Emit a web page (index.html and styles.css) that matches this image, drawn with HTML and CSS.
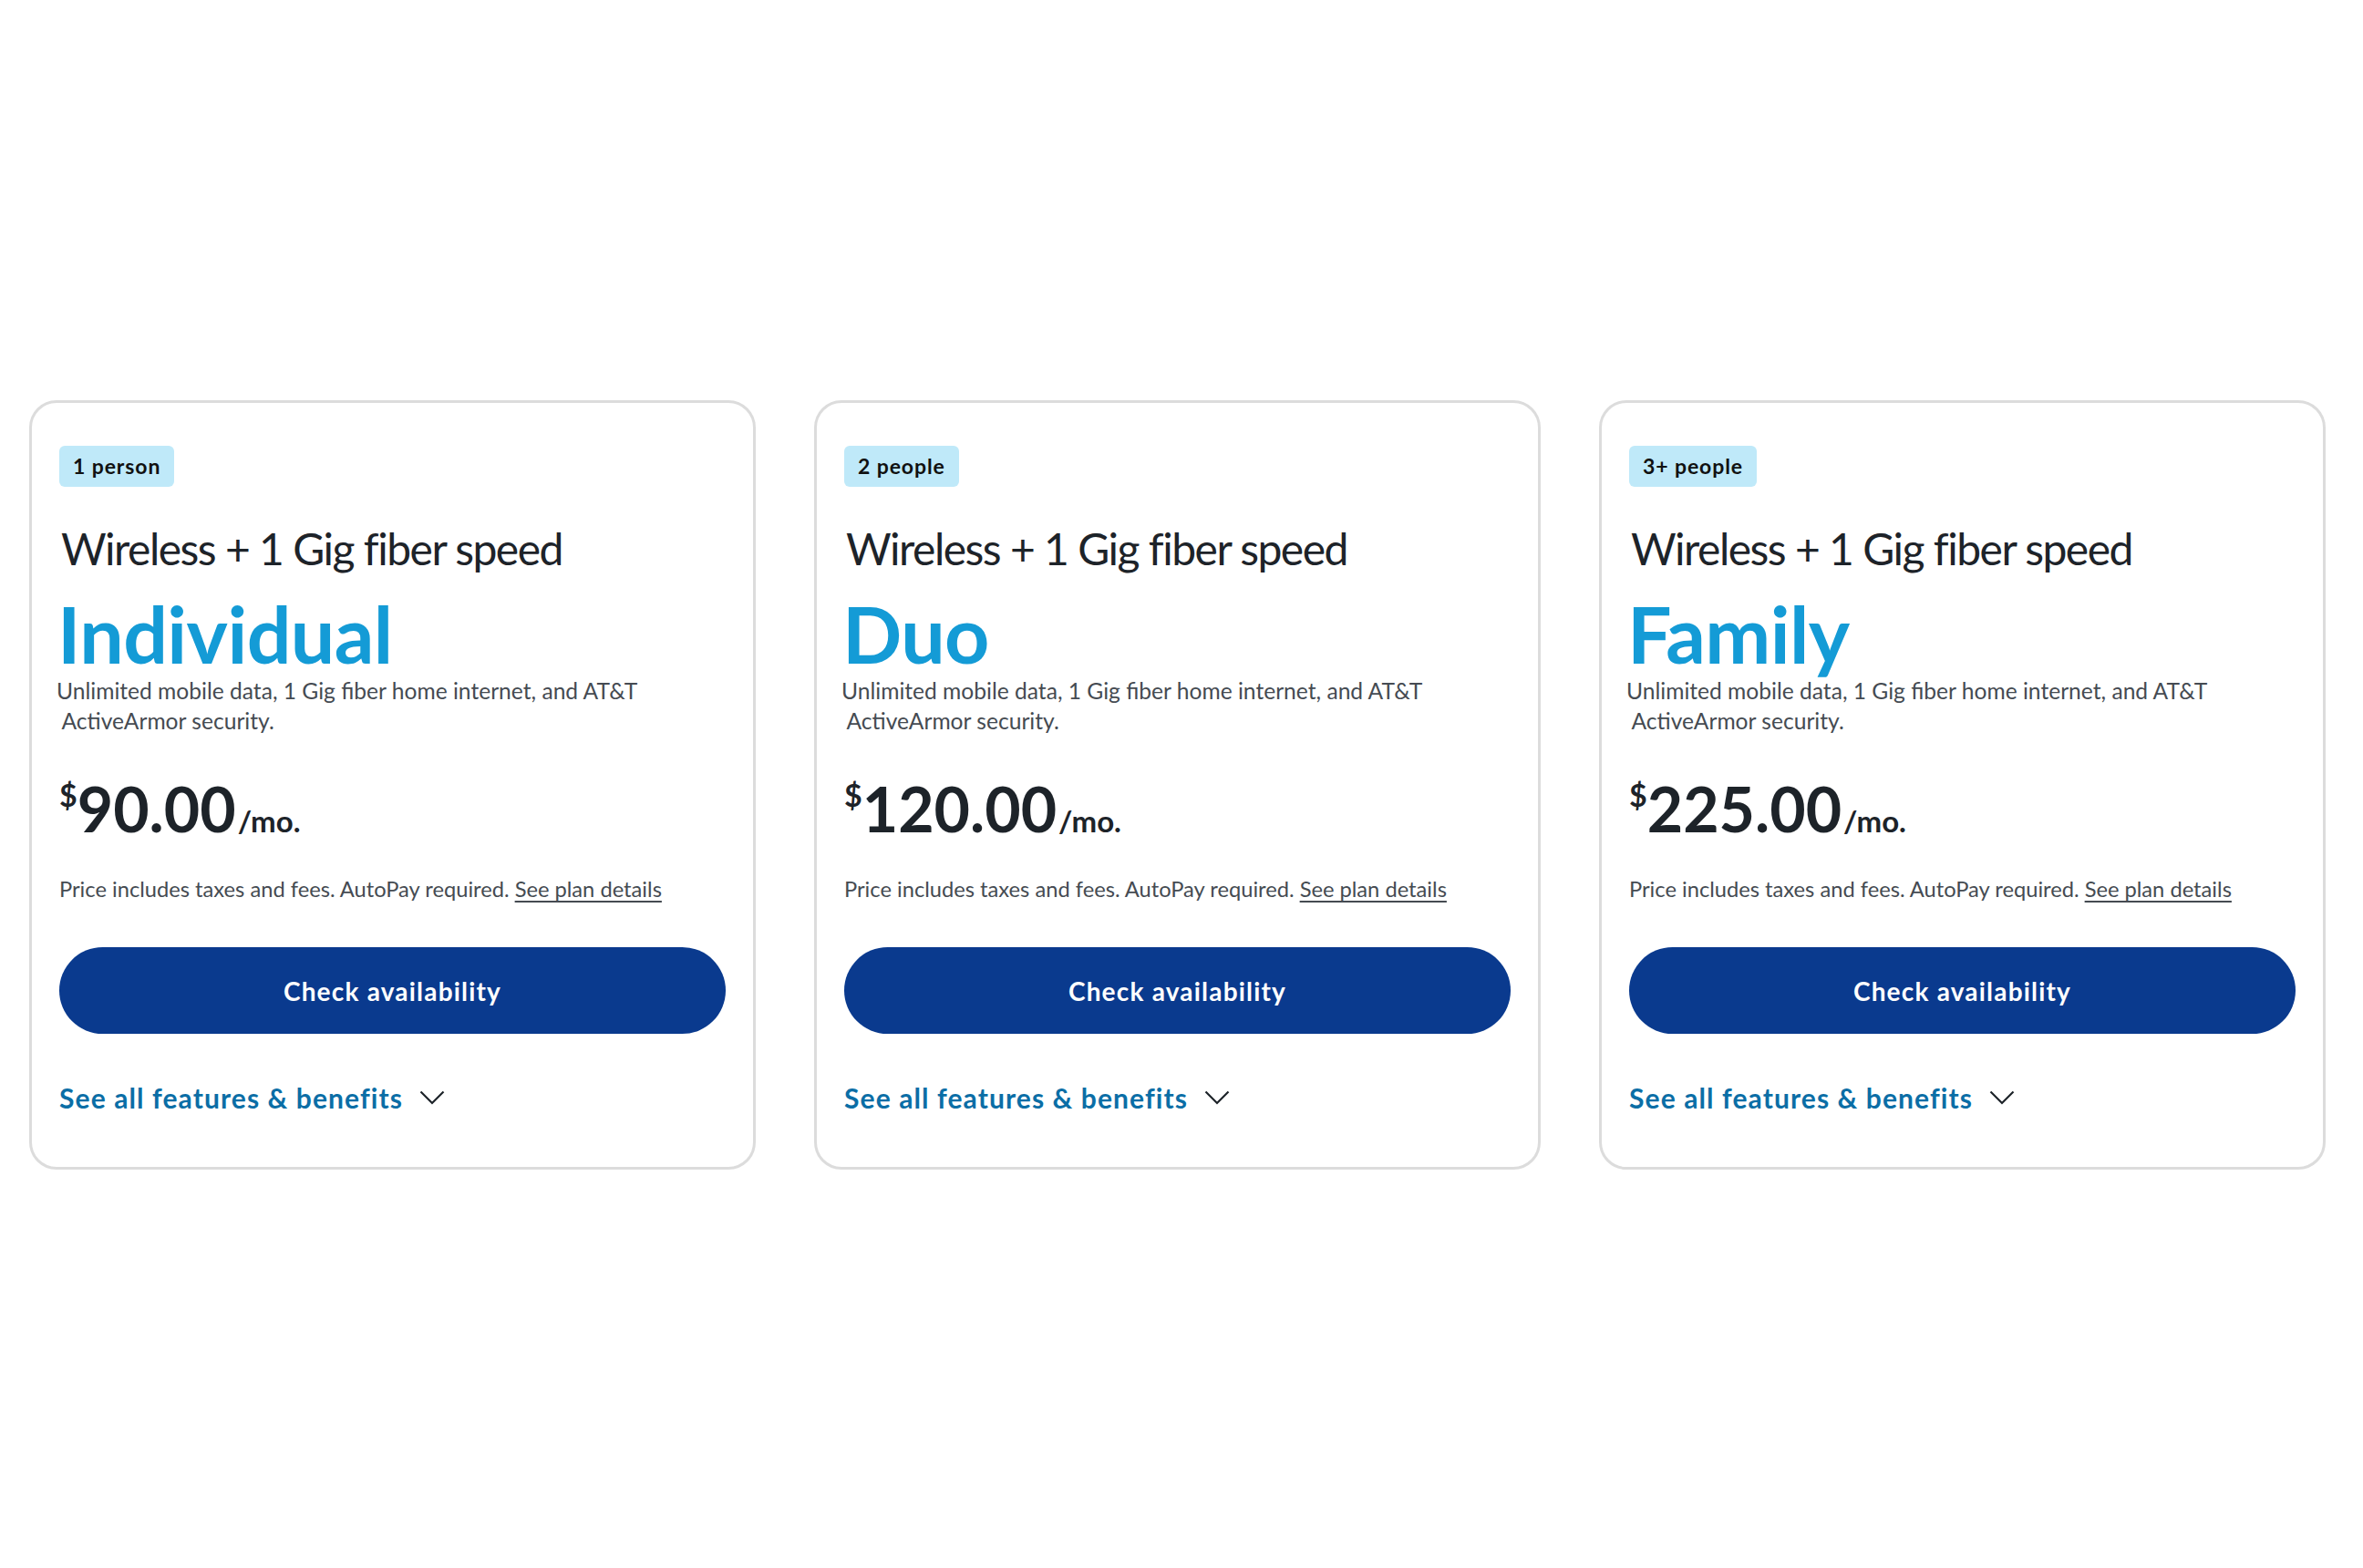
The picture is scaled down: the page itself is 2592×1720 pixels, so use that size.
FILE: index.html
```html
<!DOCTYPE html>
<html lang="en">
<head>
<meta charset="utf-8">
<title>Wireless + 1 Gig fiber plans</title>
<link rel="stylesheet" href="styles.css">
</head>
<body>
<main class="plans">
  <section class="card">
    <span class="badge">1 person</span>
    <h2 class="subtitle">Wireless + 1 Gig fiber speed</h2>
    <h3 class="title">Individual</h3>
    <p class="desc">Unlimited mobile data, 1 Gig fiber home internet, and AT&amp;T<br>&nbsp;ActiveArmor security.</p>
    <div class="price"><span class="cur">$</span><span class="amt">90.00</span><span class="per">/mo.</span></div>
    <p class="fine">Price includes taxes and fees. AutoPay required. <a href="#">See plan details</a></p>
    <button class="cta">Check availability</button>
    <a class="more" href="#">See all features &amp; benefits <svg class="chev" viewBox="0 0 28 16" width="28" height="16"><path d="M1.5 1.5 L14 14 L26.5 1.5" fill="none" stroke="#1d2329" stroke-width="2.2"/></svg></a>
  </section>
  <section class="card">
    <span class="badge">2 people</span>
    <h2 class="subtitle">Wireless + 1 Gig fiber speed</h2>
    <h3 class="title">Duo</h3>
    <p class="desc">Unlimited mobile data, 1 Gig fiber home internet, and AT&amp;T<br>&nbsp;ActiveArmor security.</p>
    <div class="price"><span class="cur">$</span><span class="amt">120.00</span><span class="per">/mo.</span></div>
    <p class="fine">Price includes taxes and fees. AutoPay required. <a href="#">See plan details</a></p>
    <button class="cta">Check availability</button>
    <a class="more" href="#">See all features &amp; benefits <svg class="chev" viewBox="0 0 28 16" width="28" height="16"><path d="M1.5 1.5 L14 14 L26.5 1.5" fill="none" stroke="#1d2329" stroke-width="2.2"/></svg></a>
  </section>
  <section class="card">
    <span class="badge">3+ people</span>
    <h2 class="subtitle">Wireless + 1 Gig fiber speed</h2>
    <h3 class="title">Family</h3>
    <p class="desc">Unlimited mobile data, 1 Gig fiber home internet, and AT&amp;T<br>&nbsp;ActiveArmor security.</p>
    <div class="price"><span class="cur">$</span><span class="amt">225.00</span><span class="per">/mo.</span></div>
    <p class="fine">Price includes taxes and fees. AutoPay required. <a href="#">See plan details</a></p>
    <button class="cta">Check availability</button>
    <a class="more" href="#">See all features &amp; benefits <svg class="chev" viewBox="0 0 28 16" width="28" height="16"><path d="M1.5 1.5 L14 14 L26.5 1.5" fill="none" stroke="#1d2329" stroke-width="2.2"/></svg></a>
  </section>
</main>
</body>
</html>
```
FILE: styles.css
```css
html, body {
  margin: 0;
  padding: 0;
  background: #ffffff;
}
body {
  font-family: Lato, "Noto Sans", "Liberation Sans", sans-serif;
  color: #1d2329;
}
.plans {
  display: grid;
  grid-template-columns: repeat(3, 797px);
  column-gap: 64px;
  padding: 439px 0 0 32px;
}
.card {
  box-sizing: border-box;
  height: 844px;
  border: 3px solid #dcdcdc;
  border-radius: 30px;
  padding: 47px 30px 0 30px;
  display: flex;
  flex-direction: column;
  align-items: flex-start;
}
.badge {
  display: inline-block;
  box-sizing: border-box;
  height: 45px;
  line-height: 45px;
  padding: 0 15px;
  background: #bfe9f9;
  border-radius: 6px;
  font-size: 23px;
  font-weight: 700;
  letter-spacing: 0.9px;
  color: #111;
}
.subtitle {
  margin: 38px 0 0 2px;
  font-size: 48px;
  font-weight: 400;
  line-height: 60px;
  letter-spacing: -1.5px;
  color: #1d2329;
}
.title {
  margin: 23px 0 0 -2px;
  font-size: 86px;
  font-weight: 700;
  line-height: 80px;
  letter-spacing: -0.6px;
  color: #149bd6;
}
.desc {
  margin: 6px 0 0 -3px;
  font-size: 24.6px;
  line-height: 33px;
  color: #454b52;
}
.price {
  margin: 45px 0 0 0;
  display: flex;
  align-items: baseline;
  color: #1d2329;
  font-weight: 700;
  line-height: 70px;
}
.cur {
  font-size: 34px;
  align-self: flex-start;
  line-height: 40px;
}
.amt {
  font-size: 68px;
}
.per {
  font-size: 33px;
  margin-left: 2px;
}
.fine {
  margin: 25px 0 0 0;
  font-size: 23.7px;
  line-height: 30px;
  color: #454b52;
}
.fine a {
  color: #454b52;
  text-decoration: underline;
  text-underline-offset: 4px;
}
.cta {
  margin-top: 49px;
  align-self: stretch;
  height: 95px;
  border: 0;
  border-radius: 48px;
  background: #0a3a8e;
  color: #fff;
  font-family: Lato, "Noto Sans", sans-serif;
  font-size: 28px;
  font-weight: 700;
  letter-spacing: 1.2px;
  cursor: pointer;
}
.more {
  margin-top: 52px;
  display: inline-flex;
  align-items: center;
  gap: 18px;
  font-size: 30px;
  font-weight: 700;
  letter-spacing: 1.1px;
  color: #0b6ea6;
  text-decoration: none;
}
.chev {
  display: block;
}
```
